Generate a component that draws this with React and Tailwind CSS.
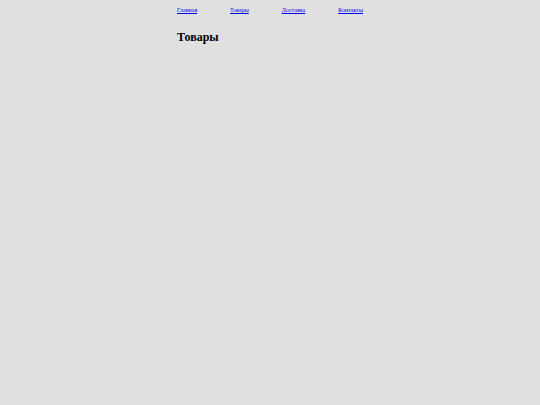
const LINKS = ['Главная', 'Товары', 'Доставка', 'Контакты'];

export default function App() {
  return (
    <div className="min-h-[405px] bg-[#e0e0e0] font-['Liberation_Serif',serif] text-black">
      <div className="mx-auto w-[186px] pt-[6px]">
        <nav className="flex justify-between text-[6px] leading-[9px]">
          {LINKS.map((l) => (
            <a key={l} href="#" className="text-[#0000ee] underline">
              {l}
            </a>
          ))}
        </nav>
        <h1 className="mt-[15px] text-[12px] font-bold leading-[14px]">Товары</h1>
      </div>
    </div>
  );
}
